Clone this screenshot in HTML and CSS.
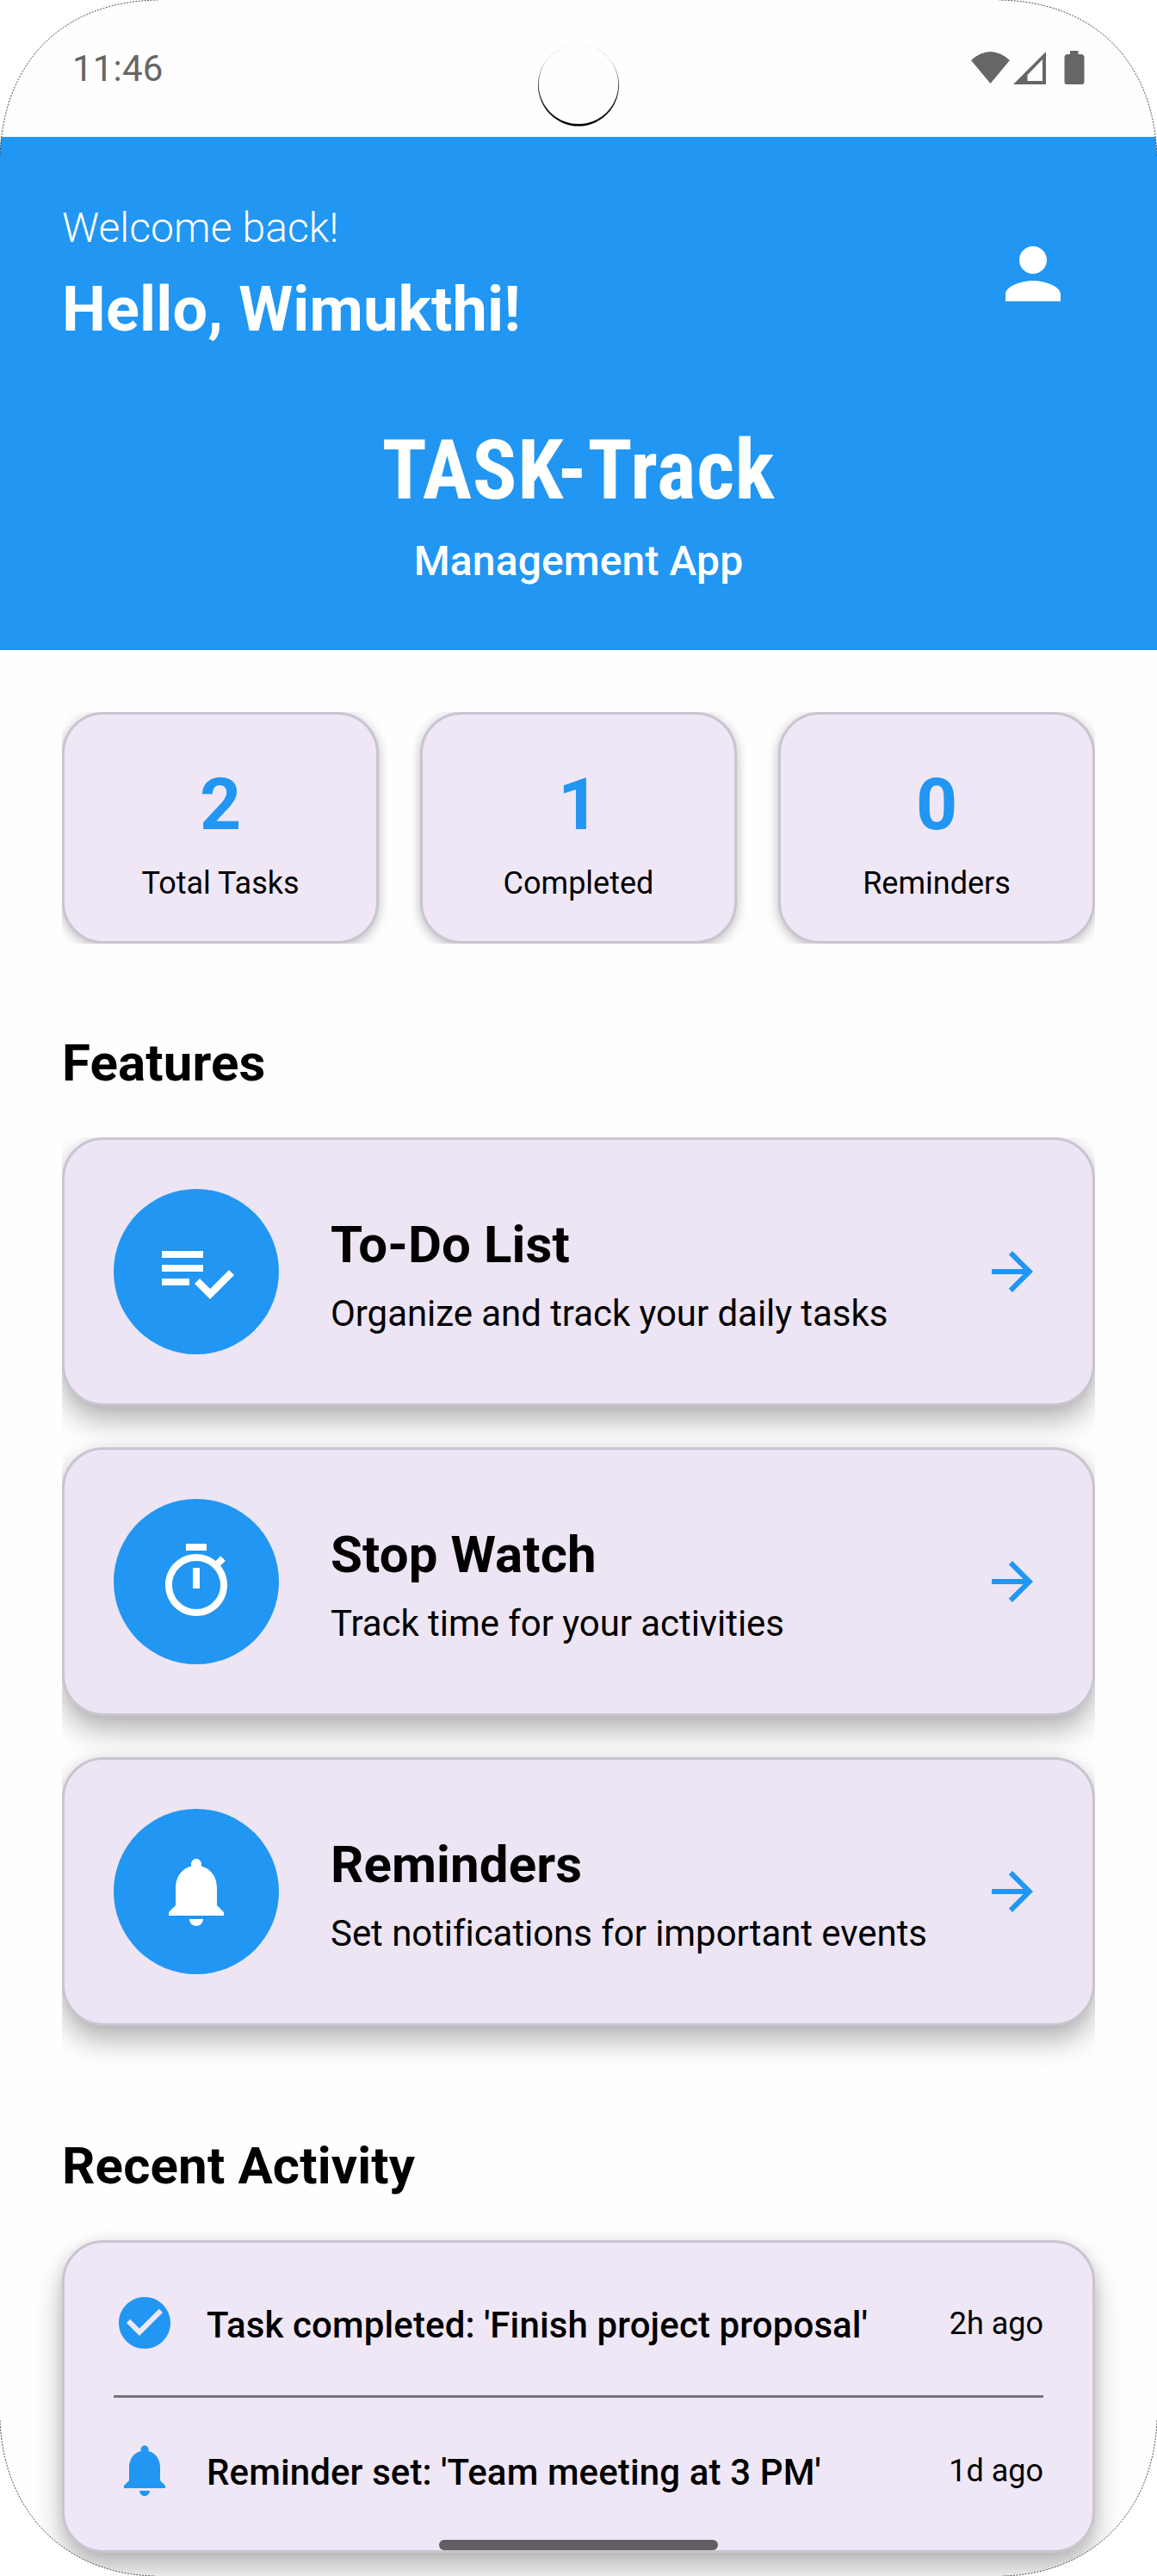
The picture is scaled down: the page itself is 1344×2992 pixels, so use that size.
FILE: index.html
```html
<!DOCTYPE html>
<html lang="en">
<head>
<meta charset="utf-8">
<title>TASK-Track</title>
<link rel="stylesheet" href="styles.css">
</head>
<body>
<svg class="sprites" width="0" height="0" aria-hidden="true">
  <symbol id="bell" viewBox="0 0 24 24"><path d="M12 22c1.1 0 2-.9 2-2h-4c0 1.1.89 2 2 2zM18 16v-5c0-3.07-1.64-5.64-4.5-6.32V4c0-.83-.67-1.5-1.5-1.5s-1.5.67-1.5 1.5v.68C7.63 5.36 6 7.92 6 11v5l-2 2v1h16v-1l-2-2z"/></symbol>
  <symbol id="arrow" viewBox="0 0 24 24"><path d="M12 4l-1.41 1.41L16.17 11H4v2h12.17l-5.58 5.59L12 20l8-8z"/></symbol>
  <symbol id="person" viewBox="0 0 24 24"><path d="M12 12c2.21 0 4-1.79 4-4s-1.79-4-4-4-4 1.79-4 4 1.79 4 4 4zm0 2c-2.67 0-8 1.34-8 4v2h16v-2c0-2.66-5.33-4-8-4z"/></symbol>
  <symbol id="list" viewBox="0 0 24 24"><path d="M14 10H2v2h12v-2zM14 6H2v2h12V6zM2 16h8v-2H2v2zM21.5 11.5L23 13l-6.99 7-4.51-4.5L13 14l3.01 3 5.49-5.5z"/></symbol>
  <symbol id="timer" viewBox="0 0 24 24"><path d="M15 1H9v2h6V1zM11 14h2V8h-2v6zM19.03 7.39l1.42-1.42c-.43-.51-.9-.99-1.41-1.41l-1.42 1.42C16.07 4.74 14.12 4 12 4c-4.97 0-9 4.03-9 9s4.02 9 9 9 9-4.03 9-9c0-2.12-.74-4.07-1.97-5.61zM12 20c-3.87 0-7-3.13-7-7s3.13-7 7-7 7 3.13 7 7-3.13 7-7 7z"/></symbol>
  <symbol id="check" viewBox="0 0 24 24"><path d="M12 2C6.48 2 2 6.48 2 12s4.48 10 10 10 10-4.48 10-10S17.52 2 12 2zM10 17l-5-5 1.41-1.41L10 14.17l7.59-7.59L19 8l-9 9z"/></symbol>
</svg>
<div class="screen">
  <div class="status">
    <span class="clock">11:46</span>
    <svg class="status-icons" viewBox="0 0 132 40">
      <path d="M0 11Q22.500-9 45 11L22.500 38z"/>
      <path fill-rule="evenodd" d="M87 1V39H49zM83 10V35H65.500V28z"/>
      <path d="M115 0h9.500v4h3q4 0 4 4v28q0 3-3 3h-17q-3 0-3-3V8q0-4 4-4h2.500z"/>
    </svg>
  </div>
  <header class="header">
    <div class="greeting">
      <div class="greeting-text">
        <p class="welcome">Welcome back!</p>
        <h1 class="hello">Hello, Wimukthi!</h1>
      </div>
      <svg class="icon-lg profile"><use href="#person"/></svg>
    </div>
    <p class="brand">TASK-Track</p>
    <p class="tagline">Management App</p>
  </header>
  <main class="content">
    <section class="stats">
      <div class="card stat"><b class="value">2</b><span class="label">Total Tasks</span></div>
      <div class="card stat"><b class="value">1</b><span class="label">Completed</span></div>
      <div class="card stat"><b class="value">0</b><span class="label">Reminders</span></div>
    </section>
    <h2 class="heading">Features</h2>
    <section class="features">
      <div class="card feature">
        <div class="disc"><svg class="icon-lg"><use href="#list"/></svg></div>
        <div class="about"><h3 class="title">To-Do List</h3><p class="desc">Organize and track your daily tasks</p></div>
        <svg class="icon"><use href="#arrow"/></svg>
      </div>
      <div class="card feature">
        <div class="disc"><svg class="icon-lg"><use href="#timer"/></svg></div>
        <div class="about"><h3 class="title">Stop Watch</h3><p class="desc">Track time for your activities</p></div>
        <svg class="icon"><use href="#arrow"/></svg>
      </div>
      <div class="card feature">
        <div class="disc"><svg class="icon-lg"><use href="#bell"/></svg></div>
        <div class="about"><h3 class="title">Reminders</h3><p class="desc">Set notifications for important events</p></div>
        <svg class="icon"><use href="#arrow"/></svg>
      </div>
    </section>
    <h2 class="heading heading-recent">Recent Activity</h2>
    <section class="card recent">
      <div class="row"><svg class="icon"><use href="#check"/></svg><span class="event">Task completed: 'Finish project proposal'</span><span class="time">2h ago</span></div>
      <div class="divider"></div>
      <div class="row"><svg class="icon"><use href="#bell"/></svg><span class="event">Reminder set: 'Team meeting at 3 PM'</span><span class="time">1d ago</span></div>
    </section>
  </main>
  <div class="home-bar"></div>
  <svg class="bezel" viewBox="0 0 1344 2992">
    <defs>
      <linearGradient id="ring" x1="0" y1="0" x2="0" y2="1"><stop offset="0" stop-opacity=".08"/><stop offset=".5" stop-opacity=".8"/><stop offset="1"/></linearGradient>
      <path id="corner-top" d="M0 181C4 72 72 2 183 0"/>
      <path id="corner-bottom" d="M0 2811C4 2918 76 2990 180 2992"/>
    </defs>
    <path class="outside" d="M0 0H183C72 2 4 72 0 181zM1344 0H1161C1272 2 1340 72 1344 181zM0 2992V2811C4 2918 76 2990 180 2992zM1344 2992V2811C1340 2918 1268 2990 1164 2992z"/>
    <g class="edge">
      <use href="#corner-top"/><use href="#corner-top" transform="matrix(-1 0 0 1 1344 0)"/>
      <use href="#corner-bottom"/><use href="#corner-bottom" transform="matrix(-1 0 0 1 1344 0)"/>
    </g>
    <path fill="url(#ring)" fill-rule="evenodd" d="M625 99a47 47.500 0 1 0 94 0a47 47.500 0 1 0-94 0zM625.800 97.900a46.200 46.200 0 1 0 92.400 0a46.200 46.200 0 1 0-92.400 0z"/>
  </svg>
</div>
</body>
</html>
```
FILE: styles.css
```css
* { box-sizing: border-box; margin: 0; padding: 0; }
body { background: #fefefe; font-family: Roboto, "Liberation Sans", sans-serif; color: #000; }
.sprites { display: block; height: 0; }
.screen { position: relative; width: 1344px; height: 2992px; overflow: hidden; }
.status { display: flex; justify-content: space-between; align-items: flex-start; height: 159px; padding: 59px 84px 0; color: #666; }
.clock { font-size: 42px; line-height: 42px; letter-spacing: .2px; }
.status-icons { width: 132px; height: 40px; fill: #666; }
.header { height: 596px; padding: 72px; background: #2196f3; color: #fff; text-align: center; }
.greeting { display: flex; justify-content: space-between; align-items: center; text-align: left; height: 174px; }
.greeting-text { align-self: flex-start; }
.welcome { font-size: 48px; font-weight: 300; line-height: 68px; letter-spacing: .1px; }
.hello { font-size: 72px; font-weight: 700; line-height: 106px; margin-top: 8px; letter-spacing: .15px; }
.profile { margin-right: 24px; }
.icon-lg { width: 96px; height: 96px; fill: #fff; flex: none; }
.icon { width: 72px; height: 72px; fill: #2196f3; flex: none; }
.brand { font-size: 96px; font-weight: 700; font-stretch: 75%; line-height: 112px; margin-top: 85px; letter-spacing: .6px; }
.tagline { font-size: 48px; font-weight: 500; line-height: 72px; margin-top: 14px; letter-spacing: .12px; }
.content { padding: 72px 72px 0; }
.card { border: 3px solid #cac4d0; border-radius: 48px; background: #efe7f6; }
.stats { display: grid; grid-template-columns: repeat(3, 1fr); gap: 48px; clip-path: inset(0); }
.stat { height: 269px; display: flex; flex-direction: column; align-items: center; box-shadow: 0 5px 14px rgba(0,0,0,.2), 0 0 14px rgba(0,0,0,.08); }
.value { font-size: 84px; line-height: 98px; color: #2196f3; margin-top: 56px; }
.label { font-size: 36px; line-height: 48px; margin-top: 18px; }
.heading { font-size: 60px; font-weight: 700; line-height: 80px; margin: 99px 0 46px; letter-spacing: .15px; }
.heading-recent { margin-top: 123px; }
.features { display: flex; flex-direction: column; gap: 48px; clip-path: inset(0 0 -52px 0); }
.feature { height: 312px; padding: 57px; display: flex; align-items: center; background: #ede5f4; }
.feature, .recent { box-shadow: 0 18px 32px rgba(0,0,0,.28), 0 0 14px rgba(0,0,0,.08); }
.disc { width: 192px; height: 192px; border-radius: 50%; background: #2196f3; display: flex; align-items: center; justify-content: center; flex: none; }
.about { flex: 1; padding: 5px 0 0 60px; }
.title { font-size: 60px; font-weight: 700; line-height: 80px; letter-spacing: .1px; }
.desc { font-size: 42px; line-height: 56px; margin-top: 12px; letter-spacing: -.06px; }
.recent { height: 363px; padding: 57px; }
.row { height: 72px; display: flex; align-items: center; }
.event { flex: 1; margin-left: 36px; padding-top: 4px; font-size: 42px; font-weight: 500; letter-spacing: .12px; }
.time { padding-top: 2px; font-size: 36px; }
.divider { height: 3px; margin: 48px 0; background: #79747a; }
.home-bar { position: absolute; left: 510px; top: 2950px; width: 324px; height: 12px; border-radius: 6px; background: #635d64; }
.bezel { position: absolute; left: 0; top: 0; width: 1344px; height: 2992px; }
.outside { fill: #fff; }
.edge { fill: none; stroke: #222; stroke-width: .8; stroke-dasharray: 2 1.500; }
```
